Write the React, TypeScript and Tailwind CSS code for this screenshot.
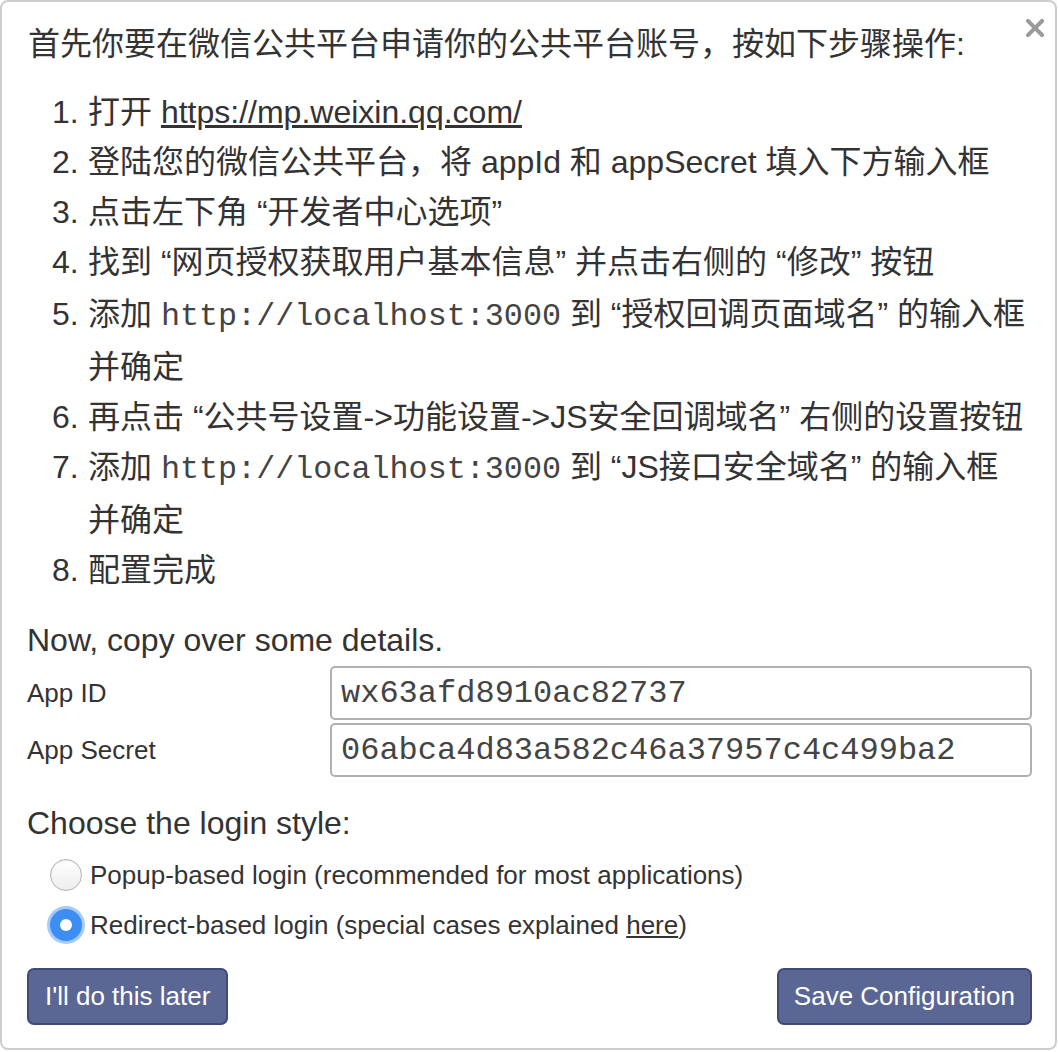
const sans = { fontFamily: '"Liberation Sans", "Noto Sans CJK SC", sans-serif' };

const Mono = ({ children }: { children: React.ReactNode }) => (
    <span className="font-['Liberation_Mono',monospace] text-[31.75px] text-[#444]">{children}</span>
);

const steps: React.ReactNode[] = [
    <>
        打开 <a className="underline">https://mp.weixin.qq.com/</a>
    </>,
    <>登陆您的微信公共平台，将 appId 和 appSecret 填入下方输入框</>,
    <>点击左下角 “开发者中心选项”</>,
    <>找到 “网页授权获取用户基本信息” 并点击右侧的 “修改” 按钮</>,
    <>
        添加 <Mono>http://localhost:3000</Mono> 到 “授权回调页面域名” 的输入框
        <br />
        并确定
    </>,
    <>再点击 “公共号设置-&gt;功能设置-&gt;JS安全回调域名” 右侧的设置按钮</>,
    <>
        添加 <Mono>http://localhost:3000</Mono> 到 “JS接口安全域名” 的输入框
        <br />
        并确定
    </>,
    <>配置完成</>,
];

function Radio({ checked }: { checked?: boolean }) {
    if (checked) {
        return (
            <span className="flex h-8 w-8 shrink-0 items-center justify-center rounded-full bg-[#3d8ef2] ring-[3px] ring-[#a6cbf8]">
                <span className="h-3 w-3 rounded-full bg-white" />
            </span>
        );
    }
    return (
        <span className="h-8 w-8 shrink-0 rounded-full border border-[#b3b3b3] bg-gradient-to-b from-white to-[#ededed] shadow-[inset_0_1px_1px_rgba(0,0,0,0.08)]" />
    );
}

export default function App() {
    return (
        <div className="h-[1052px] w-[1058px] bg-white" style={sans}>
            <div className="relative h-[1050px] w-[1057px] rounded-[8px] border-2 border-[#cdcdcd] pl-[25px] pr-[23px] pt-[17px] text-[#333]">
                {/* close */}
                <button className="absolute right-[11px] top-[17px] h-[18px] w-[18px]">
                    <svg viewBox="0 0 18 18" className="h-[18px] w-[18px]">
                        <path d="M2 2 L16 16 M16 2 L2 16" stroke="#9a9a9a" strokeWidth="4" strokeLinecap="square" />
                    </svg>
                </button>

                <p className="pl-[1px] text-[32px] leading-[51px]">首先你要在微信公共平台申请你的公共平台账号，按如下步骤操作:</p>

                <ol className="mt-[17px] pl-[25px] text-[32px] leading-[50px]">
                    {steps.map((s, i) => (
                        <li key={i} className={`flex ${i === 4 ? "pt-[2px]" : ""}`}>
                            <span className="w-[36px] shrink-0">{i + 1}.</span>
                            <span>{s}</span>
                        </li>
                    ))}
                </ol>

                <h4 className="mt-[25px] text-[32px] leading-[40px]">Now, copy over some details.</h4>

                <div className="mt-[6px] flex flex-col gap-[3px]">
                    {[
                        ["App ID", "wx63afd8910ac82737"],
                        ["App Secret", "06abca4d83a582c46a37957c4c499ba2"],
                    ].map(([label, value]) => (
                        <div key={label} className="flex items-center">
                            <label className="w-[303px] text-[26px]">{label}</label>
                            <input
                                readOnly
                                value={value}
                                className="h-[54px] flex-1 rounded-[5px] border-2 border-[#b0b0b0] px-[9px] font-['Liberation_Mono',monospace] text-[32px] text-[#444] outline-none"
                            />
                        </div>
                    ))}
                </div>

                <h4 className="mt-[26px] text-[32px] leading-[40px]">Choose the login style:</h4>

                <div className="mt-[7px] pl-[23px] text-[26px]">
                    <div className="flex h-[50px] items-center gap-[8px]">
                        <Radio />
                        <span>Popup-based login (recommended for most applications)</span>
                    </div>
                    <div className="flex h-[50px] items-center gap-[8px]">
                        <Radio checked />
                        <span>
                            Redirect-based login (special cases explained <a className="underline">here</a>)
                        </span>
                    </div>
                </div>

                <div className="mt-[18px] flex justify-between">
                    <button className="h-[57px] rounded-[7px] border-2 border-[#3e4a79] bg-[#5a6795] px-[16px] text-[26px] text-white">
                        I'll do this later
                    </button>
                    <button className="h-[57px] rounded-[7px] border-2 border-[#3e4a79] bg-[#5a6795] px-[15px] text-[26px] text-white">
                        Save Configuration
                    </button>
                </div>
            </div>
        </div>
    );
}
